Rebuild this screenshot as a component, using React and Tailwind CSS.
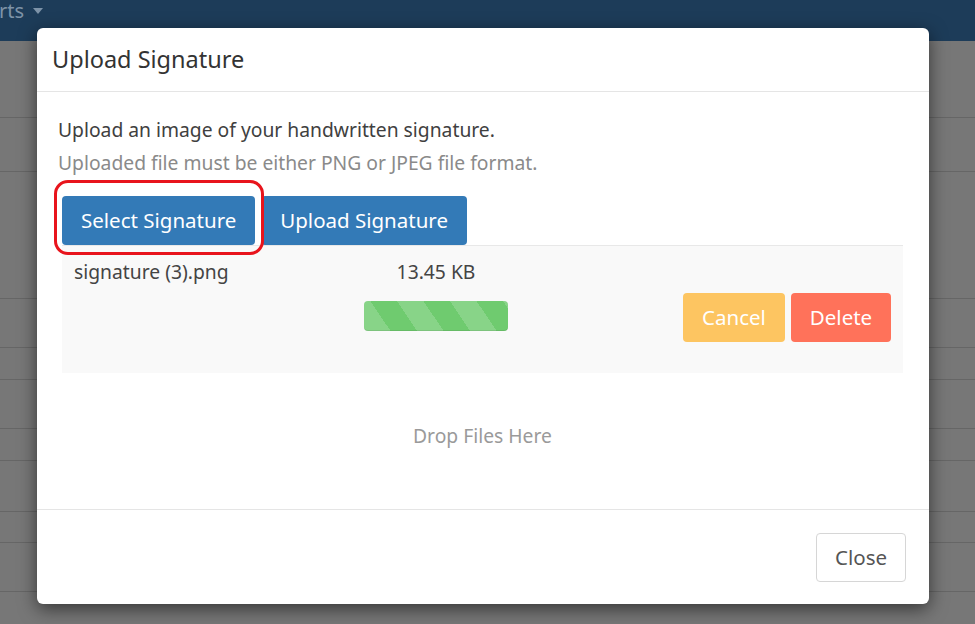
import React from "react";

const rows = [77, 54, 127, 49, 32, 49, 32, 51, 31, 49, 40];

export default function App() {
  return (
    <div
      className="relative w-[975px] h-[624px] overflow-hidden bg-[#777777]"
      style={{ fontFamily: '"Noto Sans", "Open Sans", sans-serif' }}
    >
      {/* background page (dimmed) */}
      <div className="flex flex-col">
        <div className="h-[41px] bg-[#1d3c59] flex items-start">
          <div className="flex items-center gap-[9px] -ml-[1px] mt-[-2px] text-[20px] leading-[26px] text-[#7d93a8]">
            <span>rts</span>
            <svg width="10" height="6" viewBox="0 0 10 6">
              <path d="M0 0 L10 0 L5 6 Z" fill="#7d93a8" />
            </svg>
          </div>
        </div>
        {rows.map((h, i) => (
          <div
            key={i}
            className="border-b border-[#666666]"
            style={{ height: h }}
          />
        ))}
      </div>

      {/* modal */}
      <div className="absolute left-[37px] top-[28px] w-[892px] h-[576px] bg-white rounded-[6px] shadow-[0_5px_18px_rgba(0,0,0,0.55)] flex flex-col">
        <div className="h-[64px] shrink-0 px-[15px] flex items-center border-b border-[#e5e5e5]">
          <h4 className="text-[23.5px] text-[#333333] leading-none">Upload Signature</h4>
        </div>

        <div className="relative flex-1 pl-[21px] pr-[26px] pt-[25px]">
          <p className="text-[19.3px] leading-[26px] text-[#404040]">
            Upload an image of your handwritten signature.
          </p>
          <p className="mt-[7px] text-[19.3px] leading-[26px] text-[#8a8a8a]">
            Uploaded file must be either PNG or JPEG file format.
          </p>

          <div className="relative ml-[4px] mt-[20px] flex gap-[6px]">
            <button className="h-[49px] px-[19px] rounded-[4px] bg-[#337ab7] text-white text-[20.5px] leading-none">
              Select Signature
            </button>
            <button className="h-[49px] px-[19px] rounded-[4px] bg-[#337ab7] text-white text-[20.5px] leading-none">
              Upload Signature
            </button>
            <div className="absolute left-[-8px] top-[-16px] w-[210px] h-[75px] rounded-[14px] border-[3px] border-[#e8141c] pointer-events-none" />
          </div>

          <div className="ml-[4px] h-[128px] border-t border-[#e8e8e8] bg-[#f9f9f9] px-[12px] pt-[13px]">
            <div className="flex text-[19.3px] leading-[26px] text-[#444444]">
              <span className="w-[290px]">signature (3).png</span>
              <span className="w-[144px] text-center">13.45 KB</span>
            </div>
            <div className="mt-[8px] flex items-center">
              <div className="w-[290px]" />
              <div className="w-[144px] h-[30px] mb-[3px] rounded-[4px] bg-[repeating-linear-gradient(56deg,#88d488_0px,#88d488_22px,#6fcb6f_22px,#6fcb6f_44px)] shadow-[inset_0_-1px_0_rgba(0,0,0,0.08)]" />
              <div className="ml-auto flex gap-[6px]">
                <button className="h-[49px] w-[102px] rounded-[4px] bg-[#fdc561] text-white text-[20.5px] leading-none">
                  Cancel
                </button>
                <button className="h-[49px] w-[100px] rounded-[4px] bg-[#ff725a] text-white text-[20.5px] leading-none">
                  Delete
                </button>
              </div>
            </div>
          </div>

          <p className="mt-[50px] text-center ml-[4px] text-[19.3px] leading-[26px] text-[#9a9a9a]">
            Drop Files Here
          </p>
        </div>

        <div className="h-[95px] shrink-0 border-t border-[#e5e5e5] flex justify-end pt-[23px] pr-[23px]">
          <button className="h-[49px] w-[90px] rounded-[4px] border border-[#d6d6d6] bg-white text-[#555555] text-[20.5px] leading-none">
            Close
          </button>
        </div>
      </div>
    </div>
  );
}
